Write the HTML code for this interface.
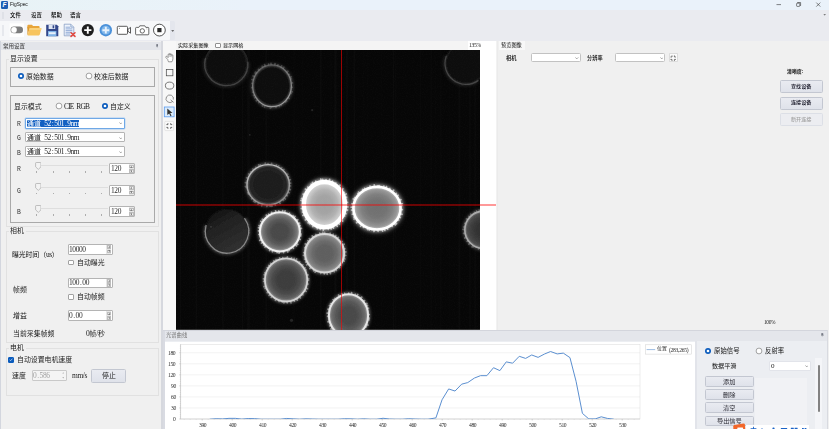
<!DOCTYPE html>
<html lang="zh"><head><meta charset="utf-8"><title>FigSpec</title><style>
*{box-sizing:border-box;margin:0;padding:0}
html,body{width:829px;height:429px;overflow:hidden;background:#f0f0f0}
body{position:relative;font-family:"Liberation Sans","Noto Sans CJK SC",sans-serif;color:#111;-webkit-font-smoothing:antialiased}
.a{position:absolute}
.t{position:absolute;white-space:nowrap;line-height:1;will-change:transform}
.song{font-family:"Liberation Serif","Noto Sans CJK SC",sans-serif}
.ss{font-family:"Liberation Sans","Noto Sans CJK SC",sans-serif}
.f7{font-size:6.9px}
.f5{font-size:5.2px}
.box{position:absolute;border:1px solid #a9a9a9}
.gb{position:absolute;border:1px solid #e1e1e1}
.inp{position:absolute;background:#fff;border:1px solid #b4b4b4;border-radius:1px}
.btn{position:absolute;background:linear-gradient(#e9ebf1,#dfe2ea);border:1px solid #c3c7d1;border-radius:1.5px;text-align:center}
.radio{position:absolute;width:6px;height:6px;border-radius:50%;border:0.6px solid #666;background:#fff}
.radio.on{width:6.4px;height:6.4px;margin:-0.2px;border:2.2px solid #0b5cbd;background:#fff}
.chk{position:absolute;width:5.6px;height:5.6px;border:1px solid #a2a2a2;background:#fff;border-radius:1px}
.chk.on{background:#0b5cbd;border-color:#0b5cbd}
.mono{font-family:"Liberation Serif",serif;font-size:1.08em;letter-spacing:-0.38px;line-height:0}
.mm{font-family:"Liberation Mono",monospace}
.pd{padding:0 0.9px}
.sr{font-family:"Liberation Serif",serif}
</style></head><body>
<div class="a" style="left:0;top:0;width:829px;height:10px;background:linear-gradient(90deg,#e8f3f6,#eaf2fa 30%)"></div>
<div class="a" style="left:0;top:10px;width:829px;height:31px;background:#eaebf0"></div>
<svg class="a" style="left:1px;top:1px" width="7" height="8" viewBox="0 0 7 8"><rect x="0" y="0" width="7" height="8" rx="1.2" fill="#1a5fb4"/><text x="3.5" y="6.4" font-family="Liberation Sans,sans-serif" font-size="6.5" font-weight="bold" font-style="italic" fill="#fff" text-anchor="middle">F</text></svg>
<div class="t ss" style="left:10.1px;top:3.0px;font-size:4.85px;color:#111;">FigSpec</div>
<svg class="a" style="left:770px;top:0" width="59" height="10" viewBox="0 0 59 10"><g stroke="#333" stroke-width="0.6" fill="none"><line x1="6.5" y1="4.6" x2="11" y2="4.6"/><rect x="26.6" y="3.2" width="3.2" height="3.2" rx="0.6"/><path d="M27.6 3.2v-0.7h3v3h-0.7"/><path d="M46.3 2.6l4 4M50.3 2.6l-4 4"/></g></svg>
<div class="a" style="left:2.2px;top:12px;width:1.4px;height:7px;background:#dfe1e7"></div>
<div class="t ss" style="left:9.8px;top:12.6px;font-size:5.4px;color:#000;font-weight:500">文件</div>
<div class="t ss" style="left:31.1px;top:12.6px;font-size:5.4px;color:#000;font-weight:500">设置</div>
<div class="t ss" style="left:50.5px;top:12.6px;font-size:5.4px;color:#000;font-weight:500">帮助</div>
<div class="t ss" style="left:69.9px;top:12.6px;font-size:5.4px;color:#000;font-weight:500">语言</div>
<div class="a" style="left:0;top:20.8px;width:169.6px;height:19.6px;background:#f6f7f9;border-radius:0 0 1px 0"></div>
<div class="a" style="left:169.8px;top:20.8px;width:5.6px;height:19.6px;background:#e4e6ed;border-radius:0 1.5px 1.5px 0"></div>
<svg class="a" style="left:171px;top:29.6px" width="3.4" height="2" viewBox="0 0 3.4 2"><path d="M0.2 0.2h3l-1.5 1.6z" fill="#444"/></svg>
<svg class="a" style="left:822.6px;top:14.3px" width="3.4" height="2" viewBox="0 0 3.4 2"><path d="M0.4 0.2h2.6l-1.3 1.4z" fill="#555"/></svg>
<div class="a" style="left:2.2px;top:25px;width:1.4px;height:11px;background:#e6e8ed"></div>
<svg class="a" style="left:0;top:20px" width="176" height="22" viewBox="0 20 176 22">
<rect x="9.6" y="23.4" width="14.4" height="13.6" fill="#fff"/>
<rect x="10.6" y="26.6" width="12.4" height="6.6" rx="3.3" fill="#7d7d7d"/>
<circle cx="14" cy="29.9" r="2.8" fill="#fff"/>
<!-- folder -->
<path d="M27.400 25.700q0-.9 .9-.9h3.600l1.200 1.300h5.600q.9 0 .9 .9v1.600h-12.200z" fill="#e8a53a"/>
<path d="M27.400 26.500v8.300q0 .5 .3 .1l1.900-6.600z" fill="#dc9a30"/>
<path d="M27.600 35.300l1.800-6.600q.2-.8 1-.8h10.200q.9 0 .7 .9l-1.500 5.800q-.2.800-1 .8h-10.900q-.5 0-.3-.1z" fill="#f7c45f"/>
<path d="M29.600 28.600q.2-.7 1-.7h10.200q.9 0 .7 .9l-.3 1.200h-12z" fill="#fad27c"/>
<!-- floppy -->
<path d="M46.2 24.8h10.6l1.5 1.5v9.9h-12.1z" fill="#33478a"/>
<rect x="48.6" y="24.8" width="6.6" height="4.2" fill="#dfe6f3"/>
<rect x="52.6" y="25.3" width="1.6" height="3" fill="#33478a"/>
<rect x="48" y="31" width="8.4" height="5.2" fill="#7fb2e6"/>
<rect x="48.8" y="32.2" width="6.8" height="2" fill="#e8f0fa"/>
<!-- doc delete -->
<path d="M64.2 24.2h6.6l3 3v8.6h-9.6z" fill="#eef3fb" stroke="#7b93bd" stroke-width="0.7"/>
<path d="M70.8 24.2v3h3" fill="#cfdcf0" stroke="#7b93bd" stroke-width="0.6"/>
<g stroke="#6f8fc8" stroke-width="0.7"><line x1="65.6" y1="27.2" x2="70" y2="27.2"/><line x1="65.6" y1="28.9" x2="72.4" y2="28.9"/><line x1="65.6" y1="30.6" x2="72.4" y2="30.6"/><line x1="65.6" y1="32.3" x2="72.4" y2="32.3"/><line x1="65.6" y1="34" x2="70" y2="34"/></g>
<path d="M71 32.800l4 3.600M75 32.800l-4 3.600" stroke="#e2463c" stroke-width="1.500" stroke-linecap="round"/>
<!-- black plus -->
<circle cx="87.8" cy="30.1" r="6.1" fill="#1f1f1f"/>
<path d="M87.8 26.5v7.2M84.2 30.1h7.2" stroke="#fff" stroke-width="1.9"/>
<!-- blue plus -->
<circle cx="105.8" cy="30.2" r="6.2" fill="#4a90d9"/>
<circle cx="105.8" cy="30.2" r="4.4" fill="#7db5ea"/>
<path d="M105.8 26.8v6.8M102.4 30.2h6.8" stroke="#e8f2fc" stroke-width="1.9"/>
<!-- video -->
<rect x="117.3" y="26.3" width="10.2" height="8" rx="1" fill="#fff" stroke="#333" stroke-width="0.8"/>
<path d="M127.9 29.4l2.6-2v5.8l-2.6-2z" fill="#fff" stroke="#333" stroke-width="0.8" stroke-linejoin="round"/>
<circle cx="119.4" cy="28.2" r="0.45" fill="#333"/>
<!-- camera -->
<path d="M136.4 27.4h2.4l1-1.6h5l1 1.6h2.2q.8 0 .8 .8v5.8q0 .8-.8 .8h-11.6q-.8 0-.8-.8v-5.8q0-.8 .8-.8z" fill="#fff" stroke="#444" stroke-width="0.8"/>
<circle cx="142.3" cy="30.9" r="2.2" fill="#fff" stroke="#444" stroke-width="0.8"/>
<circle cx="146.9" cy="28.9" r="0.4" fill="#444"/>
<!-- stop -->
<circle cx="159.4" cy="30.1" r="5.9" fill="#fff" stroke="#2a2a2a" stroke-width="0.8"/>
<rect x="157.3" y="28" width="4.2" height="4.2" fill="#2a2a2a"/>
</svg>
<div class="a" style="left:0;top:41.4px;width:1.4px;height:388px;background:#d3d6de"></div>
<div class="a" style="left:1.4px;top:42.2px;width:160px;height:8px;background:#e3e5ea"></div>
<div class="t ss" style="left:3px;top:44.2px;font-size:5.5px;color:#333;">常用设置</div>
<svg class="a" style="left:155.6px;top:44.4px" width="2.6" height="3.6" viewBox="0 0 2.6 3.6"><path d="M0.6 0.2h1.4v1.6l.5 .4h-2.4l.5-.4zM1.3 2.2v1.3" stroke="#7a7d88" stroke-width="0.5" fill="#7a7d88"/></svg>
<div class="a" style="left:161px;top:41.4px;width:1.9px;height:388px;background:#d6d8de"></div>
<div class="gb" style="left:6.4px;top:58.6px;width:152.8px;height:168.6px"></div>
<div class="a" style="left:8.6px;top:55px;width:31px;height:8px;background:#f0f0f0"></div>
<div class="t song" style="left:10px;top:55.8px;font-size:6.9px;color:#1c1c1c;">显示设置</div>
<div class="box" style="left:10px;top:66.8px;width:144.8px;height:20px"></div>
<svg class="a" style="left:16.8px;top:72.4px" width="8" height="8" viewBox="0 0 8 8"><circle cx="4" cy="4" r="3.0" fill="#0b5cbd"/><circle cx="4" cy="4" r="1.35" fill="#fff"/></svg>
<div class="t song" style="left:26px;top:73.7px;font-size:6.9px;color:#1c1c1c;">原始数据</div>
<svg class="a" style="left:85.2px;top:72.4px" width="8" height="8" viewBox="0 0 8 8"><circle cx="4" cy="4" r="2.9" fill="#fff" stroke="#5a5a5a" stroke-width="0.55"/></svg>
<div class="t song" style="left:94px;top:73.7px;font-size:6.9px;color:#1c1c1c;">校准后数据</div>
<div class="box" style="left:10px;top:95.2px;width:144.8px;height:128px"></div>
<div class="t song" style="left:14px;top:103.6px;font-size:6.9px;color:#1c1c1c;">显示模式</div>
<svg class="a" style="left:54.8px;top:102.3px" width="8" height="8" viewBox="0 0 8 8"><circle cx="4" cy="4" r="2.9" fill="#fff" stroke="#5a5a5a" stroke-width="0.55"/></svg>
<div class="t song" style="left:64px;top:103.6px;font-size:6.9px;color:#1c1c1c;"><span class="mono" style="letter-spacing:-0.8px;word-spacing:1.6px">CIE RGB</span></div>
<svg class="a" style="left:100.6px;top:102.3px" width="8" height="8" viewBox="0 0 8 8"><circle cx="4" cy="4" r="3.0" fill="#0b5cbd"/><circle cx="4" cy="4" r="1.35" fill="#fff"/></svg>
<div class="t song" style="left:110px;top:103.6px;font-size:6.9px;color:#1c1c1c;">自定义</div>
<div class="t song" style="left:17px;top:121.3px;font-size:6.9px;color:#333;"><span class="mm" style="font-size:6.4px">R</span></div>
<div class="inp" style="left:25.3px;top:118.2px;width:99.3px;height:10.4px;border-color:#6fa8e6;box-shadow:0 0 0 0.4px #a9ccf2"></div>
<div class="a" style="left:27.2px;top:119.9px;width:52px;height:7.2px;background:#1260c2"></div>
<div class="t song" style="left:27.4px;top:120.9px;font-size:6.9px;color:#fff;">通道<span class="mono" style="margin-left:3.4px;letter-spacing:-0.42px">52<span style="padding:0 0.85px">:</span>501<span style="padding:0 0.9px">.</span>9nm</span></div>
<svg class="a" style="left:118.6px;top:122.4px" width="3.6" height="2.4" viewBox="0 0 3.6 2.4"><path d="M0.3 0.4l1.5 1.5 1.5-1.5" stroke="#555" stroke-width="0.5" fill="none"/></svg>
<div class="t song" style="left:17px;top:135.40000000000003px;font-size:6.9px;color:#333;"><span class="mm" style="font-size:6.4px">G</span></div>
<div class="inp" style="left:25.3px;top:132.3px;width:99.3px;height:10.2px"></div>
<div class="t song" style="left:27.4px;top:135.00000000000003px;font-size:6.9px;color:#1c1c1c;">通道<span class="mono" style="margin-left:3.4px;letter-spacing:-0.42px">52<span style="padding:0 0.85px">:</span>501<span style="padding:0 0.9px">.</span>9nm</span></div>
<svg class="a" style="left:118.6px;top:136.5px" width="3.6" height="2.4" viewBox="0 0 3.6 2.4"><path d="M0.3 0.4l1.5 1.5 1.5-1.5" stroke="#555" stroke-width="0.5" fill="none"/></svg>
<div class="t song" style="left:17px;top:149.50000000000003px;font-size:6.9px;color:#333;"><span class="mm" style="font-size:6.4px">B</span></div>
<div class="inp" style="left:25.3px;top:146.4px;width:99.3px;height:10.2px"></div>
<div class="t song" style="left:27.4px;top:149.10000000000002px;font-size:6.9px;color:#1c1c1c;">通道<span class="mono" style="margin-left:3.4px;letter-spacing:-0.42px">52<span style="padding:0 0.85px">:</span>501<span style="padding:0 0.9px">.</span>9nm</span></div>
<svg class="a" style="left:118.6px;top:150.6px" width="3.6" height="2.4" viewBox="0 0 3.6 2.4"><path d="M0.3 0.4l1.5 1.5 1.5-1.5" stroke="#555" stroke-width="0.5" fill="none"/></svg>
<div class="t song" style="left:17px;top:166.3px;font-size:6.9px;color:#333;"><span class="mm" style="font-size:6.4px">R</span></div>
<div class="a" style="left:36px;top:165.1px;width:71.5px;height:0.9px;background:#dedede"></div>
<svg class="a" style="left:34.8px;top:161.6px" width="6.6" height="8" viewBox="0 0 6.6 8"><path d="M0.6 1.2q0-.7 .7-.7h4q.7 0 .7 .7v3.6l-2.7 2.6-2.7-2.6z" fill="#f3f3f3" stroke="#a8a8a8" stroke-width="0.7"/></svg>
<div class="a" style="left:36.3px;top:171.29999999999998px;width:0.6px;height:1.4px;background:#adadad"></div>
<div class="a" style="left:52.5px;top:171.29999999999998px;width:0.6px;height:1.4px;background:#adadad"></div>
<div class="a" style="left:68.69999999999999px;top:171.29999999999998px;width:0.6px;height:1.4px;background:#adadad"></div>
<div class="a" style="left:84.89999999999999px;top:171.29999999999998px;width:0.6px;height:1.4px;background:#adadad"></div>
<div class="a" style="left:101.1px;top:171.29999999999998px;width:0.6px;height:1.4px;background:#adadad"></div>
<div class="inp" style="left:109.4px;top:163.2px;width:26px;height:11px;border-color:#b4b4b4;background:#fff"></div>
<div class="a" style="left:128.6px;top:164.2px;width:5.6px;height:9px;background:#e6e6e6"></div>
<div class="a" style="left:129.4px;top:164.5px;width:4.6px;height:3.9px;background:#f3f3f3;border:0.4px solid #bdbdbd"></div>
<div class="a" style="left:129.4px;top:169.0px;width:4.6px;height:3.9px;background:#f3f3f3;border:0.4px solid #bdbdbd"></div>
<svg class="a" style="left:130.4px;top:165.6px" width="2.6" height="6.2" viewBox="0 0 2.6 6.2"><path d="M0.2 1.6l1.1-1.4 1.1 1.4z M0.2 4.6l1.1 1.4 1.1-1.4z" fill="#444"/></svg>
<div class="t song" style="left:110.80000000000001px;top:166.0px;font-size:6.9px;color:#2c2c2c;"><span class="mono">120</span></div>
<div class="t song" style="left:17px;top:187.70000000000002px;font-size:6.9px;color:#333;"><span class="mm" style="font-size:6.4px">G</span></div>
<div class="a" style="left:36px;top:186.6px;width:71.5px;height:0.9px;background:#dedede"></div>
<svg class="a" style="left:34.8px;top:183.1px" width="6.6" height="8" viewBox="0 0 6.6 8"><path d="M0.6 1.2q0-.7 .7-.7h4q.7 0 .7 .7v3.6l-2.7 2.6-2.7-2.6z" fill="#f3f3f3" stroke="#a8a8a8" stroke-width="0.7"/></svg>
<div class="a" style="left:36.3px;top:192.79999999999998px;width:0.6px;height:1.4px;background:#adadad"></div>
<div class="a" style="left:52.5px;top:192.79999999999998px;width:0.6px;height:1.4px;background:#adadad"></div>
<div class="a" style="left:68.69999999999999px;top:192.79999999999998px;width:0.6px;height:1.4px;background:#adadad"></div>
<div class="a" style="left:84.89999999999999px;top:192.79999999999998px;width:0.6px;height:1.4px;background:#adadad"></div>
<div class="a" style="left:101.1px;top:192.79999999999998px;width:0.6px;height:1.4px;background:#adadad"></div>
<div class="inp" style="left:109.4px;top:184.7px;width:26px;height:11px;border-color:#b4b4b4;background:#fff"></div>
<div class="a" style="left:128.6px;top:185.7px;width:5.6px;height:9px;background:#e6e6e6"></div>
<div class="a" style="left:129.4px;top:186.0px;width:4.6px;height:3.9px;background:#f3f3f3;border:0.4px solid #bdbdbd"></div>
<div class="a" style="left:129.4px;top:190.5px;width:4.6px;height:3.9px;background:#f3f3f3;border:0.4px solid #bdbdbd"></div>
<svg class="a" style="left:130.4px;top:187.1px" width="2.6" height="6.2" viewBox="0 0 2.6 6.2"><path d="M0.2 1.6l1.1-1.4 1.1 1.4z M0.2 4.6l1.1 1.4 1.1-1.4z" fill="#444"/></svg>
<div class="t song" style="left:110.80000000000001px;top:187.5px;font-size:6.9px;color:#2c2c2c;"><span class="mono">120</span></div>
<div class="t song" style="left:17px;top:209.10000000000002px;font-size:6.9px;color:#333;"><span class="mm" style="font-size:6.4px">B</span></div>
<div class="a" style="left:36px;top:208.1px;width:71.5px;height:0.9px;background:#dedede"></div>
<svg class="a" style="left:34.8px;top:204.6px" width="6.6" height="8" viewBox="0 0 6.6 8"><path d="M0.6 1.2q0-.7 .7-.7h4q.7 0 .7 .7v3.6l-2.7 2.6-2.7-2.6z" fill="#f3f3f3" stroke="#a8a8a8" stroke-width="0.7"/></svg>
<div class="a" style="left:36.3px;top:214.29999999999998px;width:0.6px;height:1.4px;background:#adadad"></div>
<div class="a" style="left:52.5px;top:214.29999999999998px;width:0.6px;height:1.4px;background:#adadad"></div>
<div class="a" style="left:68.69999999999999px;top:214.29999999999998px;width:0.6px;height:1.4px;background:#adadad"></div>
<div class="a" style="left:84.89999999999999px;top:214.29999999999998px;width:0.6px;height:1.4px;background:#adadad"></div>
<div class="a" style="left:101.1px;top:214.29999999999998px;width:0.6px;height:1.4px;background:#adadad"></div>
<div class="inp" style="left:109.4px;top:206.2px;width:26px;height:11px;border-color:#b4b4b4;background:#fff"></div>
<div class="a" style="left:128.6px;top:207.2px;width:5.6px;height:9px;background:#e6e6e6"></div>
<div class="a" style="left:129.4px;top:207.5px;width:4.6px;height:3.9px;background:#f3f3f3;border:0.4px solid #bdbdbd"></div>
<div class="a" style="left:129.4px;top:212.0px;width:4.6px;height:3.9px;background:#f3f3f3;border:0.4px solid #bdbdbd"></div>
<svg class="a" style="left:130.4px;top:208.6px" width="2.6" height="6.2" viewBox="0 0 2.6 6.2"><path d="M0.2 1.6l1.1-1.4 1.1 1.4z M0.2 4.6l1.1 1.4 1.1-1.4z" fill="#444"/></svg>
<div class="t song" style="left:110.80000000000001px;top:209.0px;font-size:6.9px;color:#2c2c2c;"><span class="mono">120</span></div>
<div class="gb" style="left:6.4px;top:231.4px;width:152.8px;height:111.8px"></div>
<div class="a" style="left:8.6px;top:227.6px;width:17px;height:8px;background:#f0f0f0"></div>
<div class="t song" style="left:10px;top:228.4px;font-size:6.9px;color:#1c1c1c;">相机</div>
<div class="t song" style="left:12px;top:251.8px;font-size:6.9px;color:#111;letter-spacing:-0.1px">曝光时间（<span class="mono">us</span>）</div>
<div class="inp" style="left:68px;top:243.8px;width:44.6px;height:10.8px;border-color:#b4b4b4;background:#fff"></div>
<div class="a" style="left:105.8px;top:244.8px;width:5.6px;height:8.8px;background:#e6e6e6"></div>
<div class="a" style="left:106.6px;top:245.10000000000002px;width:4.6px;height:3.8000000000000003px;background:#f3f3f3;border:0.4px solid #bdbdbd"></div>
<div class="a" style="left:106.6px;top:249.50000000000003px;width:4.6px;height:3.8000000000000003px;background:#f3f3f3;border:0.4px solid #bdbdbd"></div>
<svg class="a" style="left:107.6px;top:246.20000000000002px" width="2.6" height="6.000000000000001" viewBox="0 0 2.6 6.000000000000001"><path d="M0.2 1.6l1.1-1.4 1.1 1.4z M0.2 4.4l1.1 1.4 1.1-1.4z" fill="#444"/></svg>
<div class="t song" style="left:69.4px;top:246.60000000000002px;font-size:6.9px;color:#2c2c2c;"><span class="mono">10000</span></div>
<div class="chk" style="left:68.4px;top:259.6px"></div>
<div class="t song" style="left:77px;top:259.8px;font-size:6.9px;color:#1c1c1c;">自动曝光</div>
<div class="t song" style="left:13px;top:286.8px;font-size:6.9px;color:#1c1c1c;">帧频</div>
<div class="inp" style="left:68px;top:277.6px;width:44.6px;height:10.8px;border-color:#b4b4b4;background:#fff"></div>
<div class="a" style="left:105.8px;top:278.6px;width:5.6px;height:8.8px;background:#e6e6e6"></div>
<div class="a" style="left:106.6px;top:278.90000000000003px;width:4.6px;height:3.8000000000000003px;background:#f3f3f3;border:0.4px solid #bdbdbd"></div>
<div class="a" style="left:106.6px;top:283.3px;width:4.6px;height:3.8000000000000003px;background:#f3f3f3;border:0.4px solid #bdbdbd"></div>
<svg class="a" style="left:107.6px;top:280.0px" width="2.6" height="6.000000000000001" viewBox="0 0 2.6 6.000000000000001"><path d="M0.2 1.6l1.1-1.4 1.1 1.4z M0.2 4.4l1.1 1.4 1.1-1.4z" fill="#444"/></svg>
<div class="t song" style="left:69.4px;top:280.40000000000003px;font-size:6.9px;color:#2c2c2c;"><span class="mono">100<span class="pd">.</span>00</span></div>
<div class="chk" style="left:68.4px;top:294px"></div>
<div class="t song" style="left:77px;top:294.2px;font-size:6.9px;color:#1c1c1c;">自动帧频</div>
<div class="t song" style="left:12.6px;top:312.8px;font-size:6.9px;color:#1c1c1c;">增益</div>
<div class="inp" style="left:68px;top:310.3px;width:44.6px;height:10.8px;border-color:#b4b4b4;background:#fff"></div>
<div class="a" style="left:105.8px;top:311.3px;width:5.6px;height:8.8px;background:#e6e6e6"></div>
<div class="a" style="left:106.6px;top:311.6px;width:4.6px;height:3.8000000000000003px;background:#f3f3f3;border:0.4px solid #bdbdbd"></div>
<div class="a" style="left:106.6px;top:316.0px;width:4.6px;height:3.8000000000000003px;background:#f3f3f3;border:0.4px solid #bdbdbd"></div>
<svg class="a" style="left:107.6px;top:312.7px" width="2.6" height="6.000000000000001" viewBox="0 0 2.6 6.000000000000001"><path d="M0.2 1.6l1.1-1.4 1.1 1.4z M0.2 4.4l1.1 1.4 1.1-1.4z" fill="#444"/></svg>
<div class="t song" style="left:69.4px;top:313.1px;font-size:6.9px;color:#2c2c2c;"><span class="mono">0<span class="pd">.</span>00</span></div>
<div class="t song" style="left:12.6px;top:330.8px;font-size:6.9px;color:#1c1c1c;">当前采集帧频</div>
<div class="t song" style="left:86px;top:330.8px;font-size:6.9px;color:#1c1c1c;"><span class="mono">0</span>帧<span class="mono">/</span>秒</div>
<div class="gb" style="left:6.4px;top:348px;width:152.8px;height:48.4px"></div>
<div class="a" style="left:8.6px;top:344px;width:17px;height:8px;background:#f0f0f0"></div>
<div class="t song" style="left:10px;top:345.0px;font-size:6.9px;color:#1c1c1c;">电机</div>
<div class="chk on" style="left:8px;top:357px"></div>
<svg class="a" style="left:8.8px;top:358.2px" width="4" height="3.4" viewBox="0 0 4 3.4"><path d="M0.6 1.7l1 1 1.8-2" stroke="#fff" stroke-width="0.6" fill="none"/></svg>
<div class="t song" style="left:17px;top:357.40000000000003px;font-size:6.9px;color:#1c1c1c;">自动设置电机速度</div>
<div class="t song" style="left:12px;top:373.0px;font-size:6.9px;color:#1c1c1c;">速度</div>
<div class="inp" style="left:32px;top:370px;width:34.6px;height:11.4px;border-color:#c9c9c9;background:#f4f4f4"></div>
<svg class="a" style="left:61.599999999999994px;top:372.4px" width="2.6" height="6.6000000000000005" viewBox="0 0 2.6 6.6000000000000005"><path d="M0.2 1.6l1.1-1.4 1.1 1.4z M0.2 5.0l1.1 1.4 1.1-1.4z" fill="#b5b5b5"/></svg>
<div class="t song" style="left:33.4px;top:372.8px;font-size:6.9px;color:#a0a0a0;"><span class="mono">0<span class="pd">.</span>586</span></div>
<div class="t song" style="left:71.6px;top:373.2px;font-size:6.9px;color:#1c1c1c;"><span class="mono">mm/s</span></div>
<div class="btn" style="left:91.4px;top:368.8px;width:34.4px;height:13.8px"></div>
<div class="t song" style="left:101.6px;top:373.0px;font-size:6.9px;color:#1c1c1c;">停止</div>
<div class="a" style="left:163px;top:41.4px;width:13px;height:289px;background:#f7f7f7"></div>
<svg class="a" style="left:163px;top:50px" width="13" height="85" viewBox="163 50 13 85" fill="none" stroke="#444" stroke-width="0.7">
<path d="M167.7 59.4L166 57.7Q165.3 56.9 166 56.4Q166.8 56 167.4 56.8L168.1 57.6V54.7Q168.1 54 168.7 54Q169.3 54 169.3 54.7V54.1Q169.3 53.5 169.9 53.5Q170.5 53.5 170.5 54.1V54.6Q170.5 54 171.1 54Q171.7 54 171.7 54.7V55.4Q171.7 54.9 172.3 54.9Q172.9 54.9 172.9 55.6V58.6Q172.9 60.4 171.9 61.8H168.5Q167.9 60.600 167.7 59.4Z" fill="#fff" stroke="#555" stroke-width="0.6" stroke-linejoin="round"/><path d="M169.3 54.700V57M170.5 54.600V57M171.700 55.400V57.200" stroke="#777" stroke-width="0.400"/>
<rect x="166.300" y="69.400" width="6.600" height="6.400"/>
<ellipse cx="169.600" cy="85.600" rx="4.200" ry="3.500"/>
<path d="M172.700 101.600q-2.600 2-5.200 .2-2.600-2.200-1-5 1.800-2.600 4.800-1.600 2.800 1.400 2 4.400M170.600 99.800l3 2.600" stroke="#666"/>
<rect x="164.300" y="107" width="9.800" height="9.800" fill="#dcecfb" stroke="#5a9cf0" stroke-width="0.800"/>
<path d="M167.300 108.400l5.200 4.700h-2.300l1.300 2.700-1 .5-1.300-2.800-1.900 1.500z" fill="#333" stroke="none"/>
<rect x="164.800" y="121.400" width="8.800" height="9.200" rx="0.800" fill="#fafafa" stroke="#d8d8d8" stroke-width="0.600"/>
<path d="M166.400 124.600h1.500v-1.500M170.700 123.100v1.500h1.500M172.200 127.400h-1.500v1.500M167.900 128.900v-1.500h-1.500" stroke="#333" stroke-width="0.700"/>
</svg>
<div class="a" style="left:176px;top:41.4px;width:320px;height:9px;background:#f4f4f4"></div>
<div class="t ss" style="left:178px;top:42.8px;font-size:5.1px;color:#000;">实际采集图像</div>
<div class="chk" style="left:215.4px;top:42.6px;width:5.2px;height:5.2px;border-color:#909090"></div>
<div class="t ss" style="left:223px;top:42.8px;font-size:5.1px;color:#000;">显示网格</div>
<div class="a" style="left:468px;top:41.4px;width:27.6px;height:9px;background:#fff"></div>
<div class="t song" style="left:469.2px;top:43.4px;font-size:5.2px;color:#222;"><span class="mono" style="letter-spacing:-0.3px">135%</span></div>
<div class="a" style="left:479.6px;top:50.2px;width:16px;height:279.6px;background:#fff"></div>
<div class="a" style="left:495.6px;top:41.4px;width:1.4px;height:288.4px;background:#f2f2f2"></div>
<div class="a" style="left:497px;top:41.4px;width:1.2px;height:288.4px;background:#ebebeb"></div>
<svg class="a" style="left:176px;top:50.2px" width="303.6" height="279.6" viewBox="176 50.2 303.6 279.6">
<defs><filter id="b1" x="-20%" y="-20%" width="140%" height="140%"><feGaussianBlur stdDeviation="0.7"/></filter><filter id="b1s" x="-20%" y="-20%" width="140%" height="140%"><feGaussianBlur stdDeviation="0.7"/></filter><filter id="b2" x="-30%" y="-30%" width="160%" height="160%"><feGaussianBlur stdDeviation="1.5"/></filter><filter id="b3" x="-30%" y="-30%" width="160%" height="160%"><feGaussianBlur stdDeviation="2.4"/></filter>
<filter id="nz" x="0" y="0" width="100%" height="100%"><feTurbulence type="fractalNoise" baseFrequency="0.9" numOctaves="2" seed="4"/><feColorMatrix type="matrix" values="0 0 0 0 1  0 0 0 0 1  0 0 0 0 1  0.5 0.5 0 0 -0.42"/></filter>
<radialGradient id="g0" cx="50%" cy="50%" r="50%"><stop offset="0" stop-color="#070707"/><stop offset="0.4" stop-color="#070707"/><stop offset="0.65" stop-color="#080808"/><stop offset="0.86" stop-color="#0a0a0a"/><stop offset="1" stop-color="#262626"/></radialGradient>
<radialGradient id="g1" cx="50%" cy="50%" r="50%"><stop offset="0" stop-color="#090909"/><stop offset="0.4" stop-color="#090909"/><stop offset="0.65" stop-color="#0b0b0b"/><stop offset="0.86" stop-color="#101010"/><stop offset="1" stop-color="#4e4e4e"/></radialGradient>
<linearGradient id="s1" x1="0" y1="0" x2="0.3" y2="1"><stop offset="0" stop-color="#545454"/><stop offset="1" stop-color="#9a9a9a"/></linearGradient>
<radialGradient id="g2" cx="50%" cy="50%" r="50%"><stop offset="0" stop-color="#070707"/><stop offset="0.4" stop-color="#070707"/><stop offset="0.65" stop-color="#070707"/><stop offset="0.86" stop-color="#090909"/><stop offset="1" stop-color="#262626"/></radialGradient>
<radialGradient id="g3" cx="50%" cy="50%" r="50%"><stop offset="0" stop-color="#1a1a1a"/><stop offset="0.4" stop-color="#1a1a1a"/><stop offset="0.65" stop-color="#1e1e1e"/><stop offset="0.86" stop-color="#242424"/><stop offset="1" stop-color="#676767"/></radialGradient>
<linearGradient id="s3" x1="0" y1="0" x2="0.3" y2="1"><stop offset="0" stop-color="#cccccc"/><stop offset="1" stop-color="#888888"/></linearGradient>
<linearGradient id="g4" x1="0.2" y1="0" x2="0.75" y2="1"><stop offset="0" stop-color="#0d0d0d"/><stop offset="0.3" stop-color="#1f1f1f"/><stop offset="1" stop-color="#323232"/></linearGradient>
<radialGradient id="g5" cx="50%" cy="50%" r="50%"><stop offset="0" stop-color="#484848"/><stop offset="0.4" stop-color="#4a4a4a"/><stop offset="0.65" stop-color="#5a5a5a"/><stop offset="0.86" stop-color="#767676"/><stop offset="1" stop-color="#b3b3b3"/></radialGradient>
<radialGradient id="g6" cx="50%" cy="50%" r="50%"><stop offset="0" stop-color="#5e5e5e"/><stop offset="0.4" stop-color="#606060"/><stop offset="0.65" stop-color="#6c6c6c"/><stop offset="0.86" stop-color="#828282"/><stop offset="1" stop-color="#acacac"/></radialGradient>
<radialGradient id="g7" cx="50%" cy="50%" r="50%"><stop offset="0" stop-color="#3c3c3c"/><stop offset="0.4" stop-color="#3d3d3d"/><stop offset="0.65" stop-color="#4a4a4a"/><stop offset="0.86" stop-color="#606060"/><stop offset="1" stop-color="#999999"/></radialGradient>
<radialGradient id="g8" cx="50%" cy="50%" r="50%"><stop offset="0" stop-color="#484848"/><stop offset="0.4" stop-color="#4a4a4a"/><stop offset="0.65" stop-color="#575757"/><stop offset="0.86" stop-color="#6e6e6e"/><stop offset="1" stop-color="#aaaaaa"/></radialGradient>
<radialGradient id="g9" cx="50%" cy="50%" r="50%"><stop offset="0" stop-color="#323232"/><stop offset="0.4" stop-color="#333333"/><stop offset="0.65" stop-color="#3c3c3c"/><stop offset="0.86" stop-color="#4b4b4b"/><stop offset="1" stop-color="#7a7a7a"/></radialGradient>
<radialGradient id="g10" cx="50%" cy="50%" r="50%"><stop offset="0" stop-color="#707070"/><stop offset="0.4" stop-color="#737373"/><stop offset="0.65" stop-color="#7f7f7f"/><stop offset="0.86" stop-color="#969696"/><stop offset="1" stop-color="#cacaca"/></radialGradient>
<radialGradient id="g11" cx="50%" cy="50%" r="50%"><stop offset="0" stop-color="#a0a0a0"/><stop offset="0.4" stop-color="#a4a4a4"/><stop offset="0.65" stop-color="#b2b2b2"/><stop offset="0.86" stop-color="#cdcdcd"/><stop offset="1" stop-color="#e6e6e6"/></radialGradient>
</defs>
<rect x="176" y="50" width="304" height="280" fill="#060606"/>
<rect x="248.3" y="50" width="1.2" height="280" fill="#fff" opacity="0.015"/>
<rect x="359.6" y="50" width="0.7" height="280" fill="#fff" opacity="0.016"/>
<rect x="180.0" y="50" width="1.0" height="280" fill="#fff" opacity="0.019"/>
<rect x="247.2" y="50" width="1.4" height="280" fill="#fff" opacity="0.022"/>
<rect x="430.3" y="50" width="1.6" height="280" fill="#fff" opacity="0.014"/>
<rect x="221.8" y="50" width="2.0" height="280" fill="#fff" opacity="0.016"/>
<rect x="335.0" y="50" width="1.7" height="280" fill="#fff" opacity="0.018"/>
<rect x="195.5" y="50" width="1.5" height="280" fill="#fff" opacity="0.018"/>
<rect x="267.6" y="50" width="2.0" height="280" fill="#fff" opacity="0.006"/>
<rect x="319.7" y="50" width="2.0" height="280" fill="#fff" opacity="0.018"/>
<rect x="393.1" y="50" width="1.2" height="280" fill="#fff" opacity="0.021"/>
<rect x="419.5" y="50" width="2.1" height="280" fill="#fff" opacity="0.013"/>
<rect x="443.2" y="50" width="0.8" height="280" fill="#fff" opacity="0.008"/>
<rect x="242.0" y="50" width="1.3" height="280" fill="#fff" opacity="0.021"/>
<rect x="366.5" y="50" width="1.4" height="280" fill="#fff" opacity="0.011"/>
<rect x="293.3" y="50" width="1.5" height="280" fill="#fff" opacity="0.012"/>
<rect x="353.6" y="50" width="1.7" height="280" fill="#fff" opacity="0.020"/>
<rect x="458.4" y="50" width="2.2" height="280" fill="#fff" opacity="0.020"/>
<rect x="380.1" y="50" width="2.0" height="280" fill="#fff" opacity="0.009"/>
<rect x="469.2" y="50" width="1.5" height="280" fill="#fff" opacity="0.020"/>
<rect x="393.0" y="50" width="1.9" height="280" fill="#fff" opacity="0.009"/>
<rect x="350.4" y="50" width="0.7" height="280" fill="#fff" opacity="0.011"/>
<rect x="435.6" y="50" width="0.7" height="280" fill="#fff" opacity="0.022"/>
<rect x="419.4" y="50" width="0.8" height="280" fill="#fff" opacity="0.013"/>
<rect x="265.3" y="50" width="2.0" height="280" fill="#fff" opacity="0.018"/>
<rect x="189.4" y="50" width="0.7" height="280" fill="#fff" opacity="0.016"/>
<rect x="394.4" y="50" width="2.0" height="280" fill="#fff" opacity="0.011"/>
<rect x="474.1" y="50" width="2.2" height="280" fill="#fff" opacity="0.014"/>
<rect x="270.1" y="50" width="1.6" height="280" fill="#fff" opacity="0.007"/>
<rect x="185.5" y="50" width="1.3" height="280" fill="#fff" opacity="0.009"/>
<rect x="361.6" y="50" width="0.7" height="280" fill="#fff" opacity="0.008"/>
<rect x="439.8" y="50" width="2.1" height="280" fill="#fff" opacity="0.011"/>
<rect x="448.6" y="50" width="1.3" height="280" fill="#fff" opacity="0.012"/>
<rect x="334.1" y="50" width="1.6" height="280" fill="#fff" opacity="0.016"/>
<rect x="346.0" y="50" width="2.1" height="280" fill="#fff" opacity="0.016"/>
<rect x="330.1" y="50" width="1.8" height="280" fill="#fff" opacity="0.013"/>
<rect x="248.2" y="50" width="2.2" height="280" fill="#fff" opacity="0.011"/>
<rect x="334.4" y="50" width="0.6" height="280" fill="#fff" opacity="0.015"/>
<rect x="302.2" y="50" width="0.6" height="280" fill="#fff" opacity="0.015"/>
<rect x="363.2" y="50" width="0.7" height="280" fill="#fff" opacity="0.016"/>
<g filter="url(#b2)" opacity="0.42">
<path d="M247.82 62.42A21.60 21.60 0 1 1 205.44 58.71" fill="none" stroke="#424242" stroke-width="3.7"/>
</g>
<g filter="url(#b1s)">
<ellipse cx="226.3" cy="64.3" rx="21.6" ry="21.6" fill="url(#g0)"/>
<ellipse cx="226.3" cy="64.3" rx="21.6" ry="21.6" fill="none" stroke="#212121" stroke-width="1.04"/>
<path d="M247.82 62.42A21.60 21.60 0 1 1 205.44 58.71" fill="none" stroke="#424242" stroke-width="1.3" stroke-linecap="round"/>
<path d="M248.35 64.13L249.12 64.13M248.08 67.76L248.72 67.86M247.23 71.23L248.22 71.56M246.68 72.71L247.01 72.85M244.08 77.35L245.09 78.10M242.61 79.13L243.17 79.64M239.31 82.11L239.67 82.61M236.89 83.64L237.19 84.18M233.69 85.07L233.99 85.92M230.51 85.95L230.64 86.61M225.71 86.34L225.70 86.67M222.80 86.07L222.63 87.09M220.09 85.46L219.95 85.96M215.60 83.58L215.34 84.05M214.09 82.66L213.68 83.27M210.32 79.49L210.03 79.77M208.74 77.63L208.23 78.02M206.22 73.41L205.55 73.71M205.02 70.06L204.56 70.18M204.57 68.06L203.64 68.22M204.29 63.05L203.54 63.01M204.44 61.40L204.02 61.35" stroke="#424242" stroke-width="0.9" opacity="0.25" fill="none"/>
</g>
<g filter="url(#b2)" opacity="0.42">
<ellipse cx="272" cy="86" rx="19.4" ry="20.9" fill="none" stroke="url(#s1)" stroke-width="3.65"/>
</g>
<g filter="url(#b1s)">
<ellipse cx="272" cy="86" rx="19.4" ry="20.9" fill="url(#g1)"/>
<ellipse cx="272" cy="86" rx="19.4" ry="20.9" fill="none" stroke="url(#s1)" stroke-width="1.25"/>
<path d="M291.78 87.49L292.27 87.53M291.10 91.73L292.19 92.04M290.59 93.41L291.13 93.61M288.33 98.09L289.11 98.62M286.26 100.82L286.72 101.26M285.17 101.93L285.57 102.38M281.04 104.98L281.30 105.49M279.12 105.90L279.38 106.57M275.79 106.93L275.93 107.63M271.22 107.31L271.21 107.76M270.35 107.25L270.25 108.49M264.93 105.92L264.48 107.13M263.01 105.00L262.44 106.12M259.21 102.29L258.87 102.69M257.20 100.19L256.35 100.95M255.35 97.57L254.66 98.02M254.22 95.43L253.64 95.71M253.06 92.31L252.71 92.42M252.25 87.86L251.67 87.91M252.29 83.72L251.95 83.68M252.97 80.01L252.02 79.73M254.17 76.67L253.10 76.15M255.81 73.70L255.09 73.19M256.38 72.87L255.55 72.23M258.91 69.99L258.51 69.54M262.65 67.19L262.26 66.47M265.04 66.03L264.61 64.87M268.70 64.97L268.60 64.34M271.02 64.70L270.97 63.54M274.88 64.90L275.04 63.83M277.76 65.59L277.90 65.12M281.23 67.13L281.75 66.14M283.22 68.42L283.83 67.52M287.10 72.18L287.94 71.47M288.88 74.81L289.14 74.65M290.16 77.44L291.22 76.98M290.79 79.21L291.33 79.03M291.66 83.24L292.48 83.13" stroke="#8c8c8c" stroke-width="1.7" stroke-linecap="round" opacity="0.37" fill="none"/>
</g>
<g filter="url(#b2)" opacity="0.42">
<path d="M478.05 80.80A21.00 21.00 0 0 1 446.27 56.42" fill="none" stroke="#444444" stroke-width="3.7"/>
</g>
<g filter="url(#b1s)">
<ellipse cx="466" cy="63.6" rx="21" ry="21" fill="url(#g2)"/>
<ellipse cx="466" cy="63.6" rx="21" ry="21" fill="none" stroke="#0d0d0d" stroke-width="1.04"/>
<path d="M478.05 80.80A21.00 21.00 0 0 1 446.27 56.42" fill="none" stroke="#444444" stroke-width="1.3" stroke-linecap="round"/>
<path d="M477.35 81.80L477.75 82.46M473.44 83.72L473.55 84.00M472.08 84.17L472.21 84.58M468.58 84.89L468.62 85.26M462.90 84.82L462.73 85.97M461.93 84.66L461.78 85.45M458.08 83.53L457.85 84.11M454.96 81.99L454.47 82.80M451.72 79.60L451.28 80.10M450.07 77.97L449.61 78.39M448.11 75.43L447.39 75.90M445.86 70.98L445.22 71.21M445.35 69.39L444.89 69.52M444.62 65.28L443.71 65.35M444.74 60.78L444.06 60.69M445.46 57.42L444.58 57.15" stroke="#444444" stroke-width="0.9" opacity="0.26" fill="none"/>
</g>
<g filter="url(#b2)" opacity="0.42">
<ellipse cx="268.2" cy="185" rx="21.2" ry="20.2" fill="none" stroke="url(#s3)" stroke-width="3.8"/>
</g>
<g filter="url(#b1)">
<ellipse cx="268.2" cy="185" rx="21.2" ry="20.2" fill="url(#g3)"/>
<ellipse cx="268.2" cy="185" rx="21.2" ry="20.2" fill="none" stroke="url(#s3)" stroke-width="1.4"/>
<path d="M289.87 186.15L290.54 186.19M289.35 189.62L290.33 189.84M288.38 192.61L289.31 192.97M286.78 195.69L287.25 195.97M284.61 198.55L285.36 199.20M283.09 200.06L283.58 200.59M279.53 202.66L280.14 203.66M275.07 204.63L275.29 205.27M271.79 205.41L271.97 206.49M270.09 205.62L270.15 206.38M266.98 205.67L266.92 206.78M262.06 204.85L261.73 205.99M258.48 203.51L258.04 204.37M255.62 201.87L255.12 202.57M254.25 200.86L253.68 201.54M251.95 198.72L251.62 199.01M248.80 194.27L248.49 194.42M248.14 192.89L247.77 193.04M246.68 187.65L246.20 187.71M246.57 186.60L245.43 186.69M246.60 183.01L245.46 182.90M247.66 178.32L246.58 177.96M249.43 174.62L248.67 174.17M251.15 172.20L250.88 171.99M253.46 169.81L252.91 169.22M256.08 167.83L255.85 167.49M259.21 166.16L258.70 165.04M260.67 165.59L260.45 165.00M265.42 164.47L265.27 163.35M268.00 164.30L268.00 163.82M271.51 164.54L271.65 163.64M276.23 165.77L276.49 165.12M278.42 166.74L278.75 166.13M281.32 168.51L281.75 167.94M283.40 170.23L283.96 169.65M287.04 174.73L287.66 174.38M288.30 177.19L288.72 177.01M289.31 180.22L290.34 179.97M289.84 183.46L290.66 183.40" stroke="#aaaaaa" stroke-width="1.7" stroke-linecap="round" opacity="0.42" fill="none"/>
</g>
<g filter="url(#b2)" opacity="0.42">
<path d="M244.78 218.78A21.70 22.00 0 1 1 206.04 225.71" fill="none" stroke="#878787" stroke-width="3.7"/>
</g>
<g filter="url(#b1)">
<ellipse cx="227" cy="231.4" rx="21.7" ry="22.0" fill="url(#g4)"/>
<ellipse cx="227" cy="231.4" rx="21.7" ry="22.0" fill="none" stroke="#121212" stroke-width="1.04"/>
<path d="M244.78 218.78A21.70 22.00 0 1 1 206.04 225.71" fill="none" stroke="#878787" stroke-width="1.3" stroke-linecap="round"/>
<path d="M245.87 219.64L246.67 219.15M247.84 223.79L248.26 223.64M248.22 224.98L249.23 224.68M249.14 230.63L249.95 230.60M249.11 232.78L250.13 232.84M248.78 235.51L249.33 235.61M247.88 238.89L248.72 239.18M246.34 242.34L246.81 242.60M243.80 246.03L244.75 246.84M242.19 247.74L242.88 248.47M239.26 250.10L239.90 251.06M235.85 251.98L236.08 252.50M233.59 252.83L233.69 253.14M229.55 253.70L229.63 254.38M226.97 253.85L226.97 254.51M223.16 253.51L222.98 254.57M220.32 252.80L219.93 254.04M216.34 251.08L215.90 251.87M213.50 249.20L212.81 250.10M210.31 246.16L209.66 246.72M208.78 244.17L207.94 244.75M206.64 240.23L205.99 240.51M205.62 237.28L204.41 237.61M205.08 234.61L204.55 234.69M204.85 231.80L203.84 231.82M205.25 227.14L204.02 226.90" stroke="#878787" stroke-width="0.9" opacity="0.36" fill="none"/>
</g>
<g filter="url(#b2)" opacity="0.42">
<ellipse cx="279.9" cy="232" rx="20.0" ry="19.6" fill="none" stroke="#f0f0f0" stroke-width="4.4"/>
</g>
<g filter="url(#b1)">
<ellipse cx="279.9" cy="232" rx="20.0" ry="19.6" fill="url(#g5)"/>
<ellipse cx="279.9" cy="232" rx="20.0" ry="19.6" fill="none" stroke="#f0f0f0" stroke-width="2.0"/>
<path d="M300.56 234.36L301.10 234.42M300.30 235.96L300.85 236.07M299.33 239.28L300.27 239.64M296.75 243.95L297.73 244.66M295.62 245.36L296.50 246.12M292.96 247.87L293.42 248.44M289.00 250.34L289.17 250.69M287.41 251.02L287.82 252.08M283.47 252.10L283.59 252.74M279.14 252.39L279.11 253.36M277.24 252.23L277.16 252.86M272.64 251.12L272.37 251.85M270.01 249.95L269.59 250.72M265.47 246.69L264.99 247.19M263.86 244.99L263.54 245.26M262.24 242.78L261.42 243.30M260.82 240.12L259.73 240.59M259.28 234.67L258.89 234.72M259.12 231.12L258.45 231.09M259.47 228.15L258.44 227.95M260.00 226.07L259.06 225.79M261.78 221.98L260.82 221.44M263.10 219.97L262.25 219.35M266.89 216.09L266.28 215.33M268.78 214.76L268.56 214.41M271.80 213.21L271.55 212.61M275.78 212.01L275.58 211.05M278.85 211.63L278.83 211.14M282.60 211.77L282.72 210.85M284.78 212.17L285.05 211.01M289.34 213.82L289.53 213.45M292.95 216.12L293.23 215.77M294.33 217.31L295.04 216.57M297.09 220.51L297.80 220.03M298.88 223.65L299.57 223.34M299.79 226.03L300.24 225.89M300.43 228.74L301.44 228.58" stroke="#f0f0f0" stroke-width="1.7" stroke-linecap="round" opacity="0.54" fill="none"/>
</g>
<g filter="url(#b2)" opacity="0.42">
<ellipse cx="324.6" cy="253.5" rx="19.6" ry="19.2" fill="none" stroke="#d7d7d7" stroke-width="4.4"/>
</g>
<g filter="url(#b1)">
<ellipse cx="324.6" cy="253.5" rx="19.6" ry="19.2" fill="url(#g6)"/>
<ellipse cx="324.6" cy="253.5" rx="19.6" ry="19.2" fill="none" stroke="#d7d7d7" stroke-width="2.0"/>
<path d="M344.89 255.60L345.73 255.69M344.22 258.98L344.85 259.17M343.50 261.03L344.13 261.29M340.90 265.53L341.17 265.74M339.27 267.40L339.66 267.78M335.96 270.11L336.33 270.65M333.97 271.27L334.29 271.89M330.11 272.76L330.40 273.79M327.15 273.34L327.29 274.48M324.28 273.50L324.27 274.07M320.78 273.15L320.70 273.55M315.58 271.44L315.13 272.36M313.95 270.56L313.69 270.97M310.60 268.05L309.88 268.81M307.58 264.53L306.71 265.11M306.15 262.04L305.75 262.23M305.07 259.28L304.60 259.43M304.30 255.51L303.44 255.60M304.21 252.94L303.66 252.92M305.02 247.90L304.70 247.81M306.33 244.60L305.26 244.07M308.44 241.30L307.89 240.88M310.03 239.50L309.40 238.88M312.92 237.10L312.19 236.06M316.14 235.30L315.89 234.76M319.97 234.02L319.79 233.26M322.75 233.58L322.66 232.56M324.61 233.50L324.61 232.43M329.98 234.21L330.19 233.44M332.96 235.26L333.27 234.56M335.27 236.46L335.71 235.75M337.79 238.25L338.31 237.64M341.34 242.08L341.96 241.65M343.02 244.90L344.15 244.36M344.49 249.05L344.91 248.95M344.96 252.22L345.88 252.16" stroke="#d7d7d7" stroke-width="1.7" stroke-linecap="round" opacity="0.50" fill="none"/>
</g>
<g filter="url(#b2)" opacity="0.42">
<ellipse cx="286.1" cy="280.1" rx="21.2" ry="21.6" fill="none" stroke="#d2d2d2" stroke-width="4.2"/>
</g>
<g filter="url(#b1)">
<ellipse cx="286.1" cy="280.1" rx="21.2" ry="21.6" fill="url(#g7)"/>
<ellipse cx="286.1" cy="280.1" rx="21.2" ry="21.6" fill="none" stroke="#d2d2d2" stroke-width="1.8"/>
<path d="M308.00 280.24L308.66 280.25M307.62 284.23L307.99 284.30M306.42 288.41L307.56 288.87M305.19 291.02L306.21 291.60M302.63 294.73L302.96 295.02M299.83 297.47L300.39 298.18M296.83 299.54L297.32 300.43M294.19 300.82L294.43 301.42M290.72 301.90L290.99 303.10M287.17 302.37L287.20 303.11M284.02 302.30L283.95 303.08M282.38 302.08L282.32 302.41M279.13 301.24L278.97 301.71M275.77 299.76L275.39 300.46M271.72 296.92L271.17 297.55M269.82 295.01L269.11 295.64M267.90 292.51L267.27 292.93M265.73 288.29L265.08 288.55M265.12 286.51L263.97 286.85M264.25 281.58L263.58 281.63M264.22 279.06L263.40 279.02M264.79 274.97L264.28 274.85M265.27 273.20L264.79 273.04M267.66 268.07L267.28 267.83M269.16 265.97L268.77 265.66M271.03 263.92L270.70 263.58M274.14 261.42L273.89 261.03M276.23 260.20L276.04 259.83M279.77 258.75L279.55 257.99M282.84 258.05L282.79 257.73M287.33 257.84L287.37 257.13M291.42 258.47L291.51 258.13M293.91 259.27L294.16 258.62M296.11 260.26L296.69 259.14M299.45 262.43L299.70 262.11M302.48 265.30L302.83 264.99M304.77 268.44L305.32 268.10M305.77 270.29L306.08 270.13M307.46 275.17L308.02 275.05M307.96 278.81L308.73 278.76" stroke="#d2d2d2" stroke-width="1.7" stroke-linecap="round" opacity="0.49" fill="none"/>
</g>
<g filter="url(#b2)" opacity="0.42">
<ellipse cx="348.5" cy="315.6" rx="19.6" ry="21.2" fill="none" stroke="#e6e6e6" stroke-width="4.4"/>
</g>
<g filter="url(#b1)">
<ellipse cx="348.5" cy="315.6" rx="19.6" ry="21.2" fill="url(#g8)"/>
<ellipse cx="348.5" cy="315.6" rx="19.6" ry="21.2" fill="none" stroke="#e6e6e6" stroke-width="2.0"/>
<path d="M368.74 318.31L369.34 318.38M368.50 319.94L369.05 320.05M366.97 324.94L367.81 325.33M365.98 326.94L366.32 327.14M363.40 330.62L364.33 331.49M361.10 332.90L361.29 333.14M359.59 334.07L359.80 334.39M356.27 335.94L356.40 336.25M353.37 336.96L353.59 337.89M347.76 337.59L347.74 338.09M344.22 337.11L344.05 337.87M341.42 336.23L341.00 337.38M338.05 334.50L337.88 334.78M336.66 333.52L336.14 334.26M332.92 329.80L332.62 330.05M331.93 328.43L330.99 329.10M330.41 325.78L329.80 326.10M328.93 321.82L327.99 322.09M328.12 316.54L327.64 316.56M328.20 313.45L327.17 313.35M328.87 309.61L328.05 309.37M330.16 305.97L329.56 305.68M331.12 304.08L330.67 303.81M333.78 300.37L333.21 299.83M335.23 298.89L334.92 298.54M339.02 296.12L338.60 295.32M342.10 294.71L341.88 294.06M344.78 293.97L344.69 293.52M348.73 293.60L348.73 293.28M351.44 293.83L351.59 292.78M355.26 294.84L355.39 294.47M357.28 295.74L357.77 294.71M361.07 298.27L361.79 297.34M363.95 301.24L364.52 300.75M365.97 304.24L366.85 303.70M366.85 305.99L367.46 305.70M367.86 308.66L368.52 308.43M368.88 314.74L369.29 314.73" stroke="#e6e6e6" stroke-width="1.7" stroke-linecap="round" opacity="0.53" fill="none"/>
</g>
<g filter="url(#b2)" opacity="0.42">
<ellipse cx="483.5" cy="230" rx="18.7" ry="18.7" fill="none" stroke="#aaaaaa" stroke-width="4.0"/>
</g>
<g filter="url(#b1)">
<ellipse cx="483.5" cy="230" rx="18.7" ry="18.7" fill="url(#g9)"/>
<ellipse cx="483.5" cy="230" rx="18.7" ry="18.7" fill="none" stroke="#aaaaaa" stroke-width="1.6"/>
<path d="M502.74 231.58L503.14 231.61M502.45 233.67L503.38 233.85M501.32 237.40L501.65 237.54M499.85 240.26L500.65 240.76M496.92 243.87L497.13 244.10M495.03 245.48L495.79 246.49M492.10 247.28L492.49 248.05M488.35 248.68L488.62 249.73M484.42 249.28L484.48 250.37M481.16 249.16L481.10 249.64M478.73 248.70L478.63 249.07M473.87 246.73L473.66 247.08M472.81 246.07L472.11 247.13M469.77 243.56L468.92 244.40M467.75 241.15L467.12 241.59M465.85 237.81L464.82 238.27M464.51 233.47L463.59 233.64M464.20 229.62L463.03 229.60M464.39 227.32L463.49 227.19M465.26 223.69L464.87 223.55M467.24 219.61L466.48 219.12M469.32 216.91L468.95 216.57M471.28 215.06L470.80 214.47M474.61 212.87L474.43 212.54M476.81 211.90L476.53 211.16M479.40 211.14L479.22 210.31M484.67 210.74L484.72 210.01M487.86 211.20L488.06 210.32M490.03 211.84L490.25 211.22M494.97 214.48L495.35 213.97M496.44 215.68L496.70 215.40M498.42 217.76L498.78 217.47M501.24 222.40L502.18 221.99M502.28 225.54L503.53 225.24M502.72 228.23L503.95 228.12" stroke="#aaaaaa" stroke-width="1.7" stroke-linecap="round" opacity="0.42" fill="none"/>
</g>
<ellipse cx="377" cy="208.4" rx="24.6" ry="22.3" fill="none" stroke="#fff" stroke-width="4" opacity="0.35" filter="url(#b3)"/>
<g filter="url(#b2)" opacity="0.42">
<ellipse cx="377" cy="208.4" rx="23.6" ry="21.3" fill="none" stroke="#ffffff" stroke-width="5.0"/>
</g>
<g filter="url(#b1)">
<ellipse cx="377" cy="208.4" rx="23.6" ry="21.3" fill="url(#g10)"/>
<ellipse cx="377" cy="208.4" rx="23.6" ry="21.3" fill="none" stroke="#ffffff" stroke-width="2.6"/>
<path d="M401.65 209.84L402.37 209.88M400.85 214.22L402.01 214.54M399.62 217.39L400.34 217.70M398.17 219.94L398.77 220.31M395.61 223.13L396.53 223.93M394.51 224.20L395.38 225.07M391.97 226.22L392.21 226.53M387.46 228.69L387.71 229.23M384.58 229.72L384.87 230.61M382.38 230.26L382.61 231.28M378.03 230.78L378.06 231.51M374.14 230.65L374.02 231.68M369.38 229.71L369.20 230.26M367.69 229.15L367.47 229.70M363.61 227.22L363.41 227.54M361.25 225.65L360.57 226.47M357.55 222.21L356.55 222.99M355.10 218.77L354.06 219.31M354.29 217.21L353.87 217.39M353.14 214.20L352.40 214.40M352.39 210.34L351.55 210.41M352.32 207.44L351.17 207.39M352.72 204.31L351.97 204.17M354.30 199.57L353.28 199.13M355.14 197.97L354.66 197.72M358.03 194.06L357.79 193.86M359.16 192.91L358.56 192.33M362.87 190.03L362.60 189.65M364.78 188.93L364.53 188.50M370.13 186.88L369.92 186.15M374.36 186.13L374.24 185.05M378.05 186.02L378.06 185.69M379.39 186.11L379.42 185.79M383.73 186.85L383.91 186.23M386.16 187.60L386.48 186.81M389.59 189.13L389.90 188.60M392.96 191.31L393.68 190.47M395.92 194.00L396.35 193.64M397.48 195.88L398.09 195.47M400.00 200.22L400.90 199.87M401.26 204.17L402.34 203.96M401.52 205.72L401.95 205.67" stroke="#ffffff" stroke-width="1.7" stroke-linecap="round" opacity="0.57" fill="none"/>
</g>
<ellipse cx="324.4" cy="204.8" rx="21.6" ry="23.6" fill="none" stroke="#fff" stroke-width="4" opacity="0.5" filter="url(#b3)"/>
<g filter="url(#b2)" opacity="0.42">
<ellipse cx="324.4" cy="204.8" rx="20.6" ry="22.6" fill="none" stroke="#ffffff" stroke-width="6.800000000000001"/>
</g>
<g filter="url(#b1)">
<ellipse cx="324.4" cy="204.8" rx="20.6" ry="22.6" fill="url(#g11)"/>
<ellipse cx="324.4" cy="204.8" rx="20.6" ry="22.6" fill="none" stroke="#ffffff" stroke-width="4.4"/>
<path d="M346.90 207.08L347.99 207.18M346.48 210.06L347.58 210.31M345.44 213.79L345.98 214.00M344.44 216.17L344.72 216.32M341.80 220.49L342.73 221.26M338.85 223.72L339.34 224.31M336.59 225.51L337.25 226.55M333.16 227.47L333.51 228.31M330.95 228.34L331.19 229.13M328.24 229.04L328.32 229.52M323.37 229.37L323.31 230.67M320.31 228.99L320.18 229.69M317.48 228.22L317.25 228.94M313.17 226.15L312.80 226.80M309.97 223.74L309.68 224.09M308.72 222.52L308.15 223.11M306.26 219.47L305.34 220.16M303.90 215.16L302.79 215.68M302.86 212.26L302.55 212.36M302.09 208.71L301.25 208.84M301.80 205.21L301.22 205.22M302.10 200.79L300.91 200.60M302.46 198.89L301.52 198.66M303.84 194.58L303.10 194.24M306.36 189.99L305.35 189.23M308.15 187.70L307.80 187.36M311.36 184.71L311.08 184.32M313.02 183.55L312.45 182.57M315.96 181.98L315.75 181.45M320.98 180.48L320.80 179.25M322.68 180.27L322.63 179.58M326.05 180.27L326.08 179.83M329.38 180.80L329.66 179.56M332.25 181.73L332.43 181.23M335.68 183.48L335.87 183.15M339.23 186.24L339.92 185.45M342.21 189.65L342.94 189.08M344.09 192.73L344.36 192.58M344.99 194.65L346.14 194.13M346.00 197.58L346.55 197.41M346.90 202.49L347.47 202.44" stroke="#ffffff" stroke-width="1.7" stroke-linecap="round" opacity="0.57" fill="none"/>
</g>
<g filter="url(#b1s)" fill="#fff"><circle cx="291.5" cy="320.5" r="1.6" opacity="0.12"/><circle cx="312.2" cy="110.4" r="1.1" opacity="0.12"/><circle cx="249.800" cy="135" r="0.9" opacity="0.12"/><circle cx="211" cy="227" r="0.9" opacity="0.15"/></g>
<rect x="176" y="50" width="304" height="280" filter="url(#nz)" opacity="0.06"/>
</svg>
<div class="a" style="left:341px;top:50.2px;width:1px;height:279.4px;background:rgba(255,0,0,0.6)"></div>
<div class="a" style="left:176px;top:204px;width:320px;height:2px;background:rgba(255,0,0,0.4)"></div>
<div class="a" style="left:499px;top:41.4px;width:26px;height:8.4px;background:#f8f8f8"></div>
<div class="t ss" style="left:500.6px;top:42.9px;font-size:5.2px;color:#111;">预览图像</div>
<div class="t ss" style="left:506px;top:55.6px;font-size:5.2px;color:#000;font-weight:500">相机</div>
<div class="inp" style="left:531.3px;top:53.2px;width:49.6px;height:9.2px;border-color:#c2c2c2;border-radius:1.5px"></div>
<svg class="a" style="left:575.4px;top:56.8px" width="3.6" height="2.4" viewBox="0 0 3.6 2.4"><path d="M0.3 0.4l1.5 1.5 1.5-1.5" stroke="#555" stroke-width="0.5" fill="none"/></svg>
<div class="t ss" style="left:587px;top:55.6px;font-size:5.2px;color:#000;font-weight:500">分辨率</div>
<div class="inp" style="left:614.5px;top:53.2px;width:50.6px;height:9.2px;border-color:#c2c2c2;border-radius:1.5px"></div>
<svg class="a" style="left:659.6px;top:56.8px" width="3.6" height="2.4" viewBox="0 0 3.6 2.4"><path d="M0.3 0.4l1.5 1.5 1.5-1.5" stroke="#555" stroke-width="0.5" fill="none"/></svg>
<div class="a" style="left:669px;top:53.4px;width:8.6px;height:8.8px;background:#fbfbfb;border:0.6px solid #dcdcdc;border-radius:0.8px"></div>
<svg class="a" style="left:670.1px;top:54.6px" width="6.4" height="6.4" viewBox="0 0 6.4 6.4"><path d="M0.400 2h1.600v-1.600M4.400 0.400v1.600h1.600M6 4.400h-1.600v1.600M2 6v-1.600h-1.600" stroke="#444" stroke-width="0.700" fill="none"/></svg>
<div class="t ss" style="left:787.4px;top:69.5px;font-size:4.9px;color:#111;font-weight:bold">清晰度:</div>
<div class="btn" style="left:780.4px;top:79.9px;width:42.6px;height:13px"></div>
<div class="t ss" style="left:791.2px;top:83.80000000000001px;font-size:5.1px;color:#0c0c1c;font-weight:500">查找设备</div>
<div class="btn" style="left:780.4px;top:96.5px;width:42.6px;height:13px"></div>
<div class="t ss" style="left:791.2px;top:100.4px;font-size:5.1px;color:#0c0c1c;font-weight:500">连接设备</div>
<div class="btn" style="left:780.4px;top:113.4px;width:42.6px;height:13px;background:#ecedf1;border-color:#dcdfe6"></div>
<div class="t ss" style="left:791.2px;top:117.30000000000001px;font-size:5.1px;color:#a3a3a3;font-weight:500">断开连接</div>
<div class="t song" style="left:764.2px;top:319.8px;font-size:5.0px;color:#222;"><span class="mono" style="letter-spacing:-0.35px">100%</span></div>
<div class="a" style="left:163px;top:330.4px;width:665.6px;height:98.6px;background:#eceef2"></div>
<div class="a" style="left:163px;top:330.4px;width:665.6px;height:11px;background:#e4e6eb"></div>
<div class="a" style="left:162.9px;top:329.7px;width:666.1px;height:1.7px;background:#d3d5dc"></div>
<div class="a" style="left:162.9px;top:331.4px;width:1.8px;height:98px;background:#d9dbe2"></div>
<div class="t ss" style="left:166px;top:333.4px;font-size:5.3px;color:#777;">光谱曲线</div>
<svg class="a" style="left:821px;top:333.4px" width="2.600" height="3.600" viewBox="0 0 2.6 3.6"><path d="M0.600 0.200h1.400v1.600l.5 .4h-2.400l.5-.4zM1.300 2.200v1.300" stroke="#7a7d88" stroke-width="0.500" fill="#7a7d88"/></svg>
<div class="a" style="left:827.3px;top:329.7px;width:1px;height:99.3px;background:#d8dae0"></div>
<div class="a" style="left:828.3px;top:329.7px;width:0.7px;height:99.3px;background:#f0f0f0"></div>
<div class="a" style="left:165px;top:342px;width:530px;height:87px;background:#fff"></div>
<svg class="a" style="left:165px;top:342px" width="530" height="87" viewBox="165 342 530 87">
<line x1="180.6" y1="407.96" x2="640" y2="407.96" stroke="#e6e6e6" stroke-width="0.5"/>
<line x1="180.6" y1="396.92" x2="640" y2="396.92" stroke="#e6e6e6" stroke-width="0.5"/>
<line x1="180.6" y1="385.88" x2="640" y2="385.88" stroke="#e6e6e6" stroke-width="0.5"/>
<line x1="180.6" y1="374.84" x2="640" y2="374.84" stroke="#e6e6e6" stroke-width="0.5"/>
<line x1="180.6" y1="363.80" x2="640" y2="363.80" stroke="#e6e6e6" stroke-width="0.5"/>
<line x1="180.6" y1="352.76" x2="640" y2="352.76" stroke="#e6e6e6" stroke-width="0.5"/>
<rect x="180.6" y="344.5" width="459.4" height="74.5" fill="none" stroke="#d9d9d9" stroke-width="0.5"/>
<line x1="180.6" y1="344.5" x2="180.6" y2="419" stroke="#bdbdbd" stroke-width="0.5"/>
<line x1="180.6" y1="419" x2="640" y2="419" stroke="#bdbdbd" stroke-width="0.5"/>
<line x1="179.2" y1="419.00" x2="180.6" y2="419.00" stroke="#999" stroke-width="0.4"/>
<line x1="179.2" y1="407.96" x2="180.6" y2="407.96" stroke="#999" stroke-width="0.4"/>
<line x1="179.2" y1="396.92" x2="180.6" y2="396.92" stroke="#999" stroke-width="0.4"/>
<line x1="179.2" y1="385.88" x2="180.6" y2="385.88" stroke="#999" stroke-width="0.4"/>
<line x1="179.2" y1="374.84" x2="180.6" y2="374.84" stroke="#999" stroke-width="0.4"/>
<line x1="179.2" y1="363.80" x2="180.6" y2="363.80" stroke="#999" stroke-width="0.4"/>
<line x1="179.2" y1="352.76" x2="180.6" y2="352.76" stroke="#999" stroke-width="0.4"/>
<line x1="202.20" y1="419" x2="202.20" y2="420.5" stroke="#999" stroke-width="0.4"/>
<line x1="232.20" y1="419" x2="232.20" y2="420.5" stroke="#999" stroke-width="0.4"/>
<line x1="262.20" y1="419" x2="262.20" y2="420.5" stroke="#999" stroke-width="0.4"/>
<line x1="292.20" y1="419" x2="292.20" y2="420.5" stroke="#999" stroke-width="0.4"/>
<line x1="322.20" y1="419" x2="322.20" y2="420.5" stroke="#999" stroke-width="0.4"/>
<line x1="352.20" y1="419" x2="352.20" y2="420.5" stroke="#999" stroke-width="0.4"/>
<line x1="382.20" y1="419" x2="382.20" y2="420.5" stroke="#999" stroke-width="0.4"/>
<line x1="412.20" y1="419" x2="412.20" y2="420.5" stroke="#999" stroke-width="0.4"/>
<line x1="442.20" y1="419" x2="442.20" y2="420.5" stroke="#999" stroke-width="0.4"/>
<line x1="472.20" y1="419" x2="472.20" y2="420.5" stroke="#999" stroke-width="0.4"/>
<line x1="502.20" y1="419" x2="502.20" y2="420.5" stroke="#999" stroke-width="0.4"/>
<line x1="532.20" y1="419" x2="532.20" y2="420.5" stroke="#999" stroke-width="0.4"/>
<line x1="562.20" y1="419" x2="562.20" y2="420.5" stroke="#999" stroke-width="0.4"/>
<line x1="592.20" y1="419" x2="592.20" y2="420.5" stroke="#999" stroke-width="0.4"/>
<line x1="622.20" y1="419" x2="622.20" y2="420.5" stroke="#999" stroke-width="0.4"/>
<line x1="184.20" y1="419" x2="184.20" y2="419.8" stroke="#bbb" stroke-width="0.3"/>
<line x1="190.20" y1="419" x2="190.20" y2="419.8" stroke="#bbb" stroke-width="0.3"/>
<line x1="196.20" y1="419" x2="196.20" y2="419.8" stroke="#bbb" stroke-width="0.3"/>
<line x1="208.20" y1="419" x2="208.20" y2="419.8" stroke="#bbb" stroke-width="0.3"/>
<line x1="214.20" y1="419" x2="214.20" y2="419.8" stroke="#bbb" stroke-width="0.3"/>
<line x1="220.20" y1="419" x2="220.20" y2="419.8" stroke="#bbb" stroke-width="0.3"/>
<line x1="226.20" y1="419" x2="226.20" y2="419.8" stroke="#bbb" stroke-width="0.3"/>
<line x1="238.20" y1="419" x2="238.20" y2="419.8" stroke="#bbb" stroke-width="0.3"/>
<line x1="244.20" y1="419" x2="244.20" y2="419.8" stroke="#bbb" stroke-width="0.3"/>
<line x1="250.20" y1="419" x2="250.20" y2="419.8" stroke="#bbb" stroke-width="0.3"/>
<line x1="256.20" y1="419" x2="256.20" y2="419.8" stroke="#bbb" stroke-width="0.3"/>
<line x1="268.20" y1="419" x2="268.20" y2="419.8" stroke="#bbb" stroke-width="0.3"/>
<line x1="274.20" y1="419" x2="274.20" y2="419.8" stroke="#bbb" stroke-width="0.3"/>
<line x1="280.20" y1="419" x2="280.20" y2="419.8" stroke="#bbb" stroke-width="0.3"/>
<line x1="286.20" y1="419" x2="286.20" y2="419.8" stroke="#bbb" stroke-width="0.3"/>
<line x1="298.20" y1="419" x2="298.20" y2="419.8" stroke="#bbb" stroke-width="0.3"/>
<line x1="304.20" y1="419" x2="304.20" y2="419.8" stroke="#bbb" stroke-width="0.3"/>
<line x1="310.20" y1="419" x2="310.20" y2="419.8" stroke="#bbb" stroke-width="0.3"/>
<line x1="316.20" y1="419" x2="316.20" y2="419.8" stroke="#bbb" stroke-width="0.3"/>
<line x1="328.20" y1="419" x2="328.20" y2="419.8" stroke="#bbb" stroke-width="0.3"/>
<line x1="334.20" y1="419" x2="334.20" y2="419.8" stroke="#bbb" stroke-width="0.3"/>
<line x1="340.20" y1="419" x2="340.20" y2="419.8" stroke="#bbb" stroke-width="0.3"/>
<line x1="346.20" y1="419" x2="346.20" y2="419.8" stroke="#bbb" stroke-width="0.3"/>
<line x1="358.20" y1="419" x2="358.20" y2="419.8" stroke="#bbb" stroke-width="0.3"/>
<line x1="364.20" y1="419" x2="364.20" y2="419.8" stroke="#bbb" stroke-width="0.3"/>
<line x1="370.20" y1="419" x2="370.20" y2="419.8" stroke="#bbb" stroke-width="0.3"/>
<line x1="376.20" y1="419" x2="376.20" y2="419.8" stroke="#bbb" stroke-width="0.3"/>
<line x1="388.20" y1="419" x2="388.20" y2="419.8" stroke="#bbb" stroke-width="0.3"/>
<line x1="394.20" y1="419" x2="394.20" y2="419.8" stroke="#bbb" stroke-width="0.3"/>
<line x1="400.20" y1="419" x2="400.20" y2="419.8" stroke="#bbb" stroke-width="0.3"/>
<line x1="406.20" y1="419" x2="406.20" y2="419.8" stroke="#bbb" stroke-width="0.3"/>
<line x1="418.20" y1="419" x2="418.20" y2="419.8" stroke="#bbb" stroke-width="0.3"/>
<line x1="424.20" y1="419" x2="424.20" y2="419.8" stroke="#bbb" stroke-width="0.3"/>
<line x1="430.20" y1="419" x2="430.20" y2="419.8" stroke="#bbb" stroke-width="0.3"/>
<line x1="436.20" y1="419" x2="436.20" y2="419.8" stroke="#bbb" stroke-width="0.3"/>
<line x1="448.20" y1="419" x2="448.20" y2="419.8" stroke="#bbb" stroke-width="0.3"/>
<line x1="454.20" y1="419" x2="454.20" y2="419.8" stroke="#bbb" stroke-width="0.3"/>
<line x1="460.20" y1="419" x2="460.20" y2="419.8" stroke="#bbb" stroke-width="0.3"/>
<line x1="466.20" y1="419" x2="466.20" y2="419.8" stroke="#bbb" stroke-width="0.3"/>
<line x1="478.20" y1="419" x2="478.20" y2="419.8" stroke="#bbb" stroke-width="0.3"/>
<line x1="484.20" y1="419" x2="484.20" y2="419.8" stroke="#bbb" stroke-width="0.3"/>
<line x1="490.20" y1="419" x2="490.20" y2="419.8" stroke="#bbb" stroke-width="0.3"/>
<line x1="496.20" y1="419" x2="496.20" y2="419.8" stroke="#bbb" stroke-width="0.3"/>
<line x1="508.20" y1="419" x2="508.20" y2="419.8" stroke="#bbb" stroke-width="0.3"/>
<line x1="514.20" y1="419" x2="514.20" y2="419.8" stroke="#bbb" stroke-width="0.3"/>
<line x1="520.20" y1="419" x2="520.20" y2="419.8" stroke="#bbb" stroke-width="0.3"/>
<line x1="526.20" y1="419" x2="526.20" y2="419.8" stroke="#bbb" stroke-width="0.3"/>
<line x1="538.20" y1="419" x2="538.20" y2="419.8" stroke="#bbb" stroke-width="0.3"/>
<line x1="544.20" y1="419" x2="544.20" y2="419.8" stroke="#bbb" stroke-width="0.3"/>
<line x1="550.20" y1="419" x2="550.20" y2="419.8" stroke="#bbb" stroke-width="0.3"/>
<line x1="556.20" y1="419" x2="556.20" y2="419.8" stroke="#bbb" stroke-width="0.3"/>
<line x1="568.20" y1="419" x2="568.20" y2="419.8" stroke="#bbb" stroke-width="0.3"/>
<line x1="574.20" y1="419" x2="574.20" y2="419.8" stroke="#bbb" stroke-width="0.3"/>
<line x1="580.20" y1="419" x2="580.20" y2="419.8" stroke="#bbb" stroke-width="0.3"/>
<line x1="586.20" y1="419" x2="586.20" y2="419.8" stroke="#bbb" stroke-width="0.3"/>
<line x1="598.20" y1="419" x2="598.20" y2="419.8" stroke="#bbb" stroke-width="0.3"/>
<line x1="604.20" y1="419" x2="604.20" y2="419.8" stroke="#bbb" stroke-width="0.3"/>
<line x1="610.20" y1="419" x2="610.20" y2="419.8" stroke="#bbb" stroke-width="0.3"/>
<line x1="616.20" y1="419" x2="616.20" y2="419.8" stroke="#bbb" stroke-width="0.3"/>
<line x1="628.20" y1="419" x2="628.20" y2="419.8" stroke="#bbb" stroke-width="0.3"/>
<line x1="634.20" y1="419" x2="634.20" y2="419.8" stroke="#bbb" stroke-width="0.3"/>
<line x1="179.8" y1="416.79" x2="180.6" y2="416.79" stroke="#aaa" stroke-width="0.3"/>
<line x1="179.8" y1="414.58" x2="180.6" y2="414.58" stroke="#aaa" stroke-width="0.3"/>
<line x1="179.8" y1="412.38" x2="180.6" y2="412.38" stroke="#aaa" stroke-width="0.3"/>
<line x1="179.8" y1="410.17" x2="180.6" y2="410.17" stroke="#aaa" stroke-width="0.3"/>
<line x1="179.8" y1="405.75" x2="180.6" y2="405.75" stroke="#aaa" stroke-width="0.3"/>
<line x1="179.8" y1="403.54" x2="180.6" y2="403.54" stroke="#aaa" stroke-width="0.3"/>
<line x1="179.8" y1="401.34" x2="180.6" y2="401.34" stroke="#aaa" stroke-width="0.3"/>
<line x1="179.8" y1="399.13" x2="180.6" y2="399.13" stroke="#aaa" stroke-width="0.3"/>
<line x1="179.8" y1="394.71" x2="180.6" y2="394.71" stroke="#aaa" stroke-width="0.3"/>
<line x1="179.8" y1="392.50" x2="180.6" y2="392.50" stroke="#aaa" stroke-width="0.3"/>
<line x1="179.8" y1="390.30" x2="180.6" y2="390.30" stroke="#aaa" stroke-width="0.3"/>
<line x1="179.8" y1="388.09" x2="180.6" y2="388.09" stroke="#aaa" stroke-width="0.3"/>
<line x1="179.8" y1="383.67" x2="180.6" y2="383.67" stroke="#aaa" stroke-width="0.3"/>
<line x1="179.8" y1="381.46" x2="180.6" y2="381.46" stroke="#aaa" stroke-width="0.3"/>
<line x1="179.8" y1="379.26" x2="180.6" y2="379.26" stroke="#aaa" stroke-width="0.3"/>
<line x1="179.8" y1="377.05" x2="180.6" y2="377.05" stroke="#aaa" stroke-width="0.3"/>
<line x1="179.8" y1="372.63" x2="180.6" y2="372.63" stroke="#aaa" stroke-width="0.3"/>
<line x1="179.8" y1="370.42" x2="180.6" y2="370.42" stroke="#aaa" stroke-width="0.3"/>
<line x1="179.8" y1="368.22" x2="180.6" y2="368.22" stroke="#aaa" stroke-width="0.3"/>
<line x1="179.8" y1="366.01" x2="180.6" y2="366.01" stroke="#aaa" stroke-width="0.3"/>
<line x1="179.8" y1="361.59" x2="180.6" y2="361.59" stroke="#aaa" stroke-width="0.3"/>
<line x1="179.8" y1="359.38" x2="180.6" y2="359.38" stroke="#aaa" stroke-width="0.3"/>
<line x1="179.8" y1="357.18" x2="180.6" y2="357.18" stroke="#aaa" stroke-width="0.3"/>
<line x1="179.8" y1="354.97" x2="180.6" y2="354.97" stroke="#aaa" stroke-width="0.3"/>
<line x1="179.8" y1="350.55" x2="180.6" y2="350.55" stroke="#aaa" stroke-width="0.3"/>
<line x1="179.8" y1="348.34" x2="180.6" y2="348.34" stroke="#aaa" stroke-width="0.3"/>
<line x1="179.8" y1="346.14" x2="180.6" y2="346.14" stroke="#aaa" stroke-width="0.3"/>
<clipPath id="cpc"><rect x="180" y="344" width="461" height="75.100"/></clipPath>
<polyline clip-path="url(#cpc)" fill="none" stroke="#5b8fd0" stroke-width="1" stroke-linejoin="round" points="209.70,419.25 216.12,418.75 222.54,418.95 228.96,418.35 235.38,418.35 241.80,419.15 248.22,418.55 254.64,418.65 261.06,419.25 267.48,419.25 273.90,419.25 280.32,419.25 286.74,418.45 293.16,418.85 299.58,419.25 306.00,418.85 312.42,419.05 318.84,419.25 325.26,419.25 331.68,419.25 338.10,419.25 344.52,418.75 350.94,418.85 357.36,419.25 363.78,418.85 370.20,419.25 376.62,419.25 383.04,418.25 389.46,419.05 395.88,419.25 402.30,419.25 408.72,418.75 415.14,419.05 421.56,419.25 427.98,419.25 435.92,417.87 442.03,399.82 448.66,388.94 455.03,391.06 461.67,384.16 467.77,382.57 474.41,378.06 480.51,375.67 486.88,375.67 493.51,367.71 499.88,370.63 506.25,361.87 512.62,363.20 519.26,356.30 525.63,358.42 531.73,354.97 538.10,357.36 544.73,353.91 550.57,351.52 557.21,353.91 563.31,353.11 569.95,357.62 576.05,381.24 582.42,413.36 588.79,418.93 595.16,418.93 601.26,416.81 607.37,418.40 613.74,419.19"/>
<rect x="645.4" y="344.8" width="45.9" height="9.3" fill="#fff" stroke="#cfcfcf" stroke-width="0.5"/>
<line x1="646.6" y1="349.6" x2="655.2" y2="349.6" stroke="#5b8fd0" stroke-width="0.6"/>
</svg>
<div class="t sr" style="right:653.4px;top:417.00px;font-size:5.6px;letter-spacing:-0.4px;color:#2a2a2a">0</div>
<div class="t sr" style="right:653.4px;top:405.96px;font-size:5.6px;letter-spacing:-0.4px;color:#2a2a2a">30</div>
<div class="t sr" style="right:653.4px;top:394.92px;font-size:5.6px;letter-spacing:-0.4px;color:#2a2a2a">60</div>
<div class="t sr" style="right:653.4px;top:383.88px;font-size:5.6px;letter-spacing:-0.4px;color:#2a2a2a">90</div>
<div class="t sr" style="right:653.4px;top:372.84px;font-size:5.6px;letter-spacing:-0.4px;color:#2a2a2a">120</div>
<div class="t sr" style="right:653.4px;top:361.80px;font-size:5.6px;letter-spacing:-0.4px;color:#2a2a2a">150</div>
<div class="t sr" style="right:653.4px;top:350.76px;font-size:5.6px;letter-spacing:-0.4px;color:#2a2a2a">180</div>
<div class="t sr" style="left:198.60px;top:422.6px;font-size:5.6px;letter-spacing:-0.4px;color:#2a2a2a">390</div>
<div class="t sr" style="left:228.60px;top:422.6px;font-size:5.6px;letter-spacing:-0.4px;color:#2a2a2a">400</div>
<div class="t sr" style="left:258.60px;top:422.6px;font-size:5.6px;letter-spacing:-0.4px;color:#2a2a2a">410</div>
<div class="t sr" style="left:288.60px;top:422.6px;font-size:5.6px;letter-spacing:-0.4px;color:#2a2a2a">420</div>
<div class="t sr" style="left:318.60px;top:422.6px;font-size:5.6px;letter-spacing:-0.4px;color:#2a2a2a">430</div>
<div class="t sr" style="left:348.60px;top:422.6px;font-size:5.6px;letter-spacing:-0.4px;color:#2a2a2a">440</div>
<div class="t sr" style="left:378.60px;top:422.6px;font-size:5.6px;letter-spacing:-0.4px;color:#2a2a2a">450</div>
<div class="t sr" style="left:408.60px;top:422.6px;font-size:5.6px;letter-spacing:-0.4px;color:#2a2a2a">460</div>
<div class="t sr" style="left:438.60px;top:422.6px;font-size:5.6px;letter-spacing:-0.4px;color:#2a2a2a">470</div>
<div class="t sr" style="left:468.60px;top:422.6px;font-size:5.6px;letter-spacing:-0.4px;color:#2a2a2a">480</div>
<div class="t sr" style="left:498.60px;top:422.6px;font-size:5.6px;letter-spacing:-0.4px;color:#2a2a2a">490</div>
<div class="t sr" style="left:528.60px;top:422.6px;font-size:5.6px;letter-spacing:-0.4px;color:#2a2a2a">500</div>
<div class="t sr" style="left:558.60px;top:422.6px;font-size:5.6px;letter-spacing:-0.4px;color:#2a2a2a">510</div>
<div class="t sr" style="left:588.60px;top:422.6px;font-size:5.6px;letter-spacing:-0.4px;color:#2a2a2a">520</div>
<div class="t sr" style="left:618.60px;top:422.6px;font-size:5.6px;letter-spacing:-0.4px;color:#2a2a2a">530</div>
<div class="t ss" style="left:656.8px;top:347.2px;font-size:4.9px;color:#222">位置</div>
<div class="t sr" style="left:668.6px;top:347.5px;font-size:5.6px;letter-spacing:-0.3px;color:#2a2a2a">(283,265)</div>
<div class="a" style="left:695px;top:341.4px;width:2.4px;height:88px;background:#e2e4ea"></div>
<svg class="a" style="left:703.9px;top:347.0px" width="8" height="8" viewBox="0 0 8 8"><circle cx="4" cy="4" r="3.0" fill="#0b5cbd"/><circle cx="4" cy="4" r="1.35" fill="#fff"/></svg>
<div class="t ss" style="left:714px;top:347.6px;font-size:6.4px;color:#111;">原始信号</div>
<svg class="a" style="left:755.0px;top:347.0px" width="8" height="8" viewBox="0 0 8 8"><circle cx="4" cy="4" r="2.9" fill="#fff" stroke="#5a5a5a" stroke-width="0.55"/></svg>
<div class="t ss" style="left:765px;top:347.6px;font-size:6.4px;color:#111;">反射率</div>
<div class="t ss" style="left:711.5px;top:363.2px;font-size:6.1px;color:#111;">数据平滑</div>
<div class="a" style="left:769px;top:361.3px;width:41.6px;height:9.8px;background:#fff;border:0.5px solid #e2e4ea;border-radius:1px"></div>
<div class="t song" style="left:771.4px;top:363.40000000000003px;font-size:6.6px;color:#222;"><span class="mono">0</span></div>
<svg class="a" style="left:804.6px;top:365.4px" width="3.6" height="2.4" viewBox="0 0 3.6 2.4"><path d="M0.3 0.4l1.5 1.5 1.5-1.5" stroke="#555" stroke-width="0.5" fill="none"/></svg>
<div class="a" style="left:755.4px;top:378px;width:52px;height:51px;background:#f1f2f5"></div>
<div class="btn" style="left:704.6px;top:376.2px;width:49px;height:10.8px"></div>
<div class="t ss" style="left:723.1px;top:378.59999999999997px;font-size:6.2px;color:#2a2a33;">添加</div>
<div class="btn" style="left:704.6px;top:389.2px;width:49px;height:10.8px"></div>
<div class="t ss" style="left:723.1px;top:391.59999999999997px;font-size:6.2px;color:#2a2a33;">删除</div>
<div class="btn" style="left:704.6px;top:402.4px;width:49px;height:10.8px"></div>
<div class="t ss" style="left:723.1px;top:404.79999999999995px;font-size:6.2px;color:#2a2a33;">清空</div>
<div class="btn" style="left:704.6px;top:415.5px;width:49px;height:10.8px"></div>
<div class="t ss" style="left:716.9000000000001px;top:417.9px;font-size:6.2px;color:#2a2a33;">导出信号</div>
<div class="a" style="left:814.8px;top:358px;width:7.6px;height:71px;background:#f4f5f8"></div>
<div class="a" style="left:818.3px;top:365px;width:1.7px;height:47.4px;background:#828282;border-radius:1px"></div>
<div class="a" style="left:745.7px;top:425.2px;width:63.6px;height:4px;background:#fff"></div>
<svg class="a" style="left:732px;top:422px" width="15" height="7" viewBox="732 422 15 7"><path d="M733.300 426.200q0-1 1-1.200l9.200-1.500q1.300-.2 1.400 1.100l.3 4.400h-11.900z" fill="#f2672a"/><path d="M737.300 429v-0.800q0-.6 .6-.6h4.600q.6 0 .6 .6v.8z" fill="#fff"/></svg>
<div class="t ss" style="left:749.8px;top:427.2px;font-size:7px;color:#1b63c7;font-weight:bold">中</div>
<svg class="a" style="left:760px;top:426px" width="50" height="3" viewBox="760 426 50 3" fill="#1b63c7"><circle cx="762" cy="429" r="0.7"/><rect x="772.4" y="427.5" width="2.200" height="2" rx="1"/><rect x="780.800" y="427.900" width="6.400" height="1.200" rx="0.300"/><rect x="790.800" y="427.700" width="3" height="1.400" rx="0.300"/><rect x="794.600" y="427.700" width="3" height="1.400" rx="0.300"/><rect x="802" y="428" width="1.800" height="1" /><rect x="804.600" y="428" width="1.800" height="1"/></svg>
</body></html>
